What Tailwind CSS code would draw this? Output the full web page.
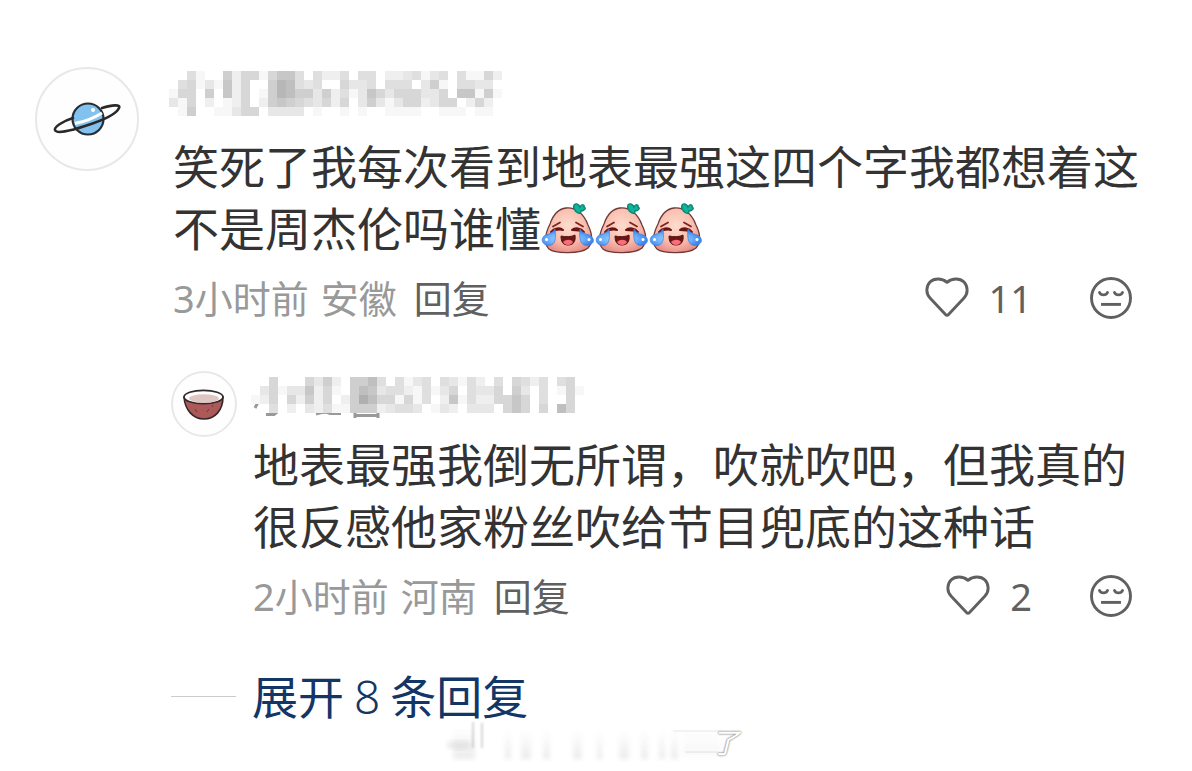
<!DOCTYPE html>
<html lang="zh-CN">
<head>
<meta charset="utf-8">
<meta name="viewport" content="width=device-width, initial-scale=1">
<title>评论</title>
<script src="https://cdn.jsdelivr.net/npm/@tailwindcss/browser@4"></script>
</head>
<body class="bg-white font-['Noto_Sans','Noto_Sans_CJK_SC',sans-serif] text-[#333]">
<!-- Shared symbols -->
<svg class="absolute size-0" aria-hidden="true">
  <defs>
    <radialGradient id="skin" cx=".48" cy=".4" r=".62"><stop offset="0" stop-color="#fddccd"/><stop offset=".6" stop-color="#f9bfb0"/><stop offset="1" stop-color="#e98d86"/></radialGradient>
    <radialGradient id="tear" cx=".45" cy=".6" r=".6"><stop offset="0" stop-color="#b4dcff"/><stop offset=".6" stop-color="#6bb0fb"/><stop offset="1" stop-color="#2f78ea"/></radialGradient>
    <symbol id="laugh" viewBox="0 0 54 54">
      <path d="M25 6C35 5 43 12 47 23C51 31 53 39 47 46C40 52 14 52 8 47C2 41 5 30 9 22C12 13 17 7 25 6Z" fill="url(#skin)" stroke="#6d3a38" stroke-width="1.3"/>
      <path d="M37 11C33 9 32 5 33 3C35 1 38 2 39 5C41 1 44 3 43 5C46 6 43 9 40 9C40 11 39 12 37 11Z" fill="#12b39a" stroke="#08806f" stroke-width="1.3"/>
      <path d="M12 24.500L19 20.500M35 20.500L42 24.500" stroke="#7c2620" stroke-width="1.8" stroke-linecap="round"/>
      <path d="M10 30C13 26 19 25 22 28C18 27 14 28 10 30ZM31 28C34 25 40 26 43 30C39 28 35 28 31 28Z" fill="#6b1414" stroke="#6b1414" stroke-width="2" stroke-linejoin="round"/>
      <path d="M20 34C24 35 31 35 34 33C35 40 32 43 27 43C22 43 20 40 20 34Z" fill="#6a1714" stroke="#5a1512"/>
      <path d="M22 40C25 37 30 37 32 40C30 44 24 44 22 40Z" fill="#fb6d78"/>
      <path d="M14 27C15 35 15 43 8 43.500C2 43.500 -1 38 3 34C6 32 11 32 14 27ZM39 27C38 35 39 43 45 43.500C52 43.500 55 38 50 34C47 32 42 32 39 27Z" fill="url(#tear)" stroke="#3b80e5" stroke-width=".7"/>
      <circle cx="5.500" cy="37.500" r="1.500" fill="#fff"/><circle cx="48" cy="37.500" r="1.500" fill="#fff"/>
    </symbol>
    <symbol id="heart" viewBox="0 0 44 42">
      <path d="M22 5.300C17 .8 9 1 5 5C.8 9.500 .8 16.500 5 21L20.500 37.500Q22 39.200 23.500 37.500L39 21C43.200 16.500 43.200 9.500 39 5C35 1 27 .8 22 5.300Z" fill="none" stroke="#606060" stroke-width="2.900" stroke-linejoin="round"/>
    </symbol>
    <symbol id="face" viewBox="0 0 44 44">
      <g fill="none" stroke="#606060" stroke-width="2.900" stroke-linecap="round">
        <circle cx="22" cy="22" r="19.500"/>
        <path d="M10.500 16.500C12 19.700 17 19.700 18.500 16.500M25.500 16.500C27 19.700 32 19.700 33.500 16.500"/>
        <path d="M13.500 28.400H30.500" stroke-linecap="square"/>
      </g>
    </symbol>
  </defs>
</svg>

<main class="pl-[35px] pr-[44px] pt-[67px]">
  <article class="flex items-start gap-[30px]">
    <svg class="size-[104px] shrink-0" viewBox="0 0 104 104" role="img" aria-label="头像">
      <circle cx="52" cy="52" r="51" fill="#fefefe" stroke="#e8e8e8" stroke-width="2"/>
      <circle cx="53" cy="52" r="15.500" fill="#83c1ee" stroke="#272d32" stroke-width="2.200"/>
      <path d="M40 56.500Q54 54 67 46" fill="none" stroke="#fff" stroke-width="3"/>
      <path d="M67 41C77 38 86 37 84 41C81 48 66 54 50 59C35 64 21 67 20 63C19 60 28 54 38 51" fill="none" stroke="#292929" stroke-width="2.600" stroke-linecap="round"/>
      <circle cx="58" cy="43" r="2" fill="#fff"/>
    </svg>

    <div class="min-w-0 flex-1">
      <svg data-rows="0041006255157740422404402234134041152/0451317250069843400533404440361044330/1550607250169866362413753555335077161/3150201250267654352503631355235502520/0160011355033330100101001111001110110" class="mosaic mt-1 h-[45px] w-[333px]" viewBox="0 0 333 45" role="img" aria-label="用户昵称"></svg>

      <div class="pl-1">
        <p class="mt-[19px] text-[46px] leading-[62px]">笑死了我每次看到地表最强这四个字我都想着这不是周杰伦吗谁懂<span class="inline-flex h-[54px] align-[-10px]"><svg class="size-[54px]" role="img" aria-label="笑哭"><use href="#laugh"/></svg><svg class="size-[54px]" role="img" aria-label="笑哭"><use href="#laugh"/></svg><svg class="size-[54px]" role="img" aria-label="笑哭"><use href="#laugh"/></svg></span></p>
        <div class="mt-[14px] flex items-center pr-[15px] text-[38px] leading-[50px] text-[#999]">
          <span>3小时前</span><span class="ml-3">安徽</span>
          <button type="button" class="ml-[17px] text-[#606060]">回复</button>
          <button type="button" class="ml-auto flex items-center gap-5 text-[#606060]" aria-label="赞 11"><svg class="h-[42px] w-[44px]"><use href="#heart"/></svg><span>11</span></button>
          <button type="button" class="ml-[57px]" aria-label="不喜欢"><svg class="size-[44px]"><use href="#face"/></svg></button>
        </div>
      </div>
    </div>
  </article>

  <section class="pl-[136px] pt-12">
    <article class="flex items-start gap-[14px]">
      <svg class="size-[66px] shrink-0" viewBox="0 0 66 66" role="img" aria-label="头像">
        <circle cx="33" cy="33" r="32" fill="#fefefe" stroke="#e8e8e8" stroke-width="2"/>
        <path d="M13 26C14 39 22 48 33 48C44 48 52 39 52 26Z" fill="#ad595a" stroke="#33282a" stroke-width="1.600"/>
        <ellipse cx="32.500" cy="26" rx="19.500" ry="6.700" fill="#fff" stroke="#33282a" stroke-width="1.700"/>
        <ellipse cx="33" cy="27.500" rx="15" ry="4.200" fill="#e0c6c3"/>
        <path d="M24 38l2 3M36 41l2-3M41 36l1-2" stroke="#74383a" stroke-width="1"/>
      </svg>
      <div class="min-w-0 flex-1">
        <svg data-rows="0050005362066840413404314204054240450/0351337251068734421413504335063040151/125052625026a855151402714225575040050/0040203241166623443013203330575050850" class="mosaic mt-[6px] h-[42px] w-[333px]" viewBox="0 0 333 42" role="img" aria-label="用户昵称"><g fill="none" stroke="#999" stroke-width="3"><path d="M8 23L4 31M15 37.500H23L26 35M65 37Q74 34 79 36.500H90M104 34V41M127 36V41M104 38.500H127"/></g></svg>
        <div class="pl-[2px]">
          <p class="mt-[14px] text-[46px] leading-[62px]">地表最强我倒无所谓，吹就吹吧，但我真的很反感他家粉丝吹给节目兜底的这种话</p>
          <div class="mt-[14px] flex items-center pr-[15px] text-[38px] leading-[50px] text-[#999]">
            <span>2小时前</span><span class="ml-3">河南</span>
            <button type="button" class="ml-[17px] text-[#606060]">回复</button>
            <button type="button" class="ml-auto flex items-center gap-5 text-[#606060]" aria-label="赞 2"><svg class="h-[42px] w-[44px]"><use href="#heart"/></svg><span>2</span></button>
            <button type="button" class="ml-[57px]" aria-label="不喜欢"><svg class="size-[44px]"><use href="#face"/></svg></button>
          </div>
        </div>
      </div>
    </article>

    <button type="button" class="mt-[44px] flex items-center gap-4 text-[46px] leading-[62px] text-[#133667]"><span class="h-px w-[65px] bg-[#ccc]"></span><span class="flex gap-[10px]"><span>展开</span> <span class="font-light">8</span> <span>条回复</span></span></button>
  </section>
</main>

<!-- Smeared watermark -->
<footer class="flex h-10 items-center justify-center">
  <div class="relative h-10 w-[302px]">
    <svg class="absolute inset-0 -top-2 h-12 w-[302px]" viewBox="0 0 302 48" aria-hidden="true">
      <defs>
        <linearGradient id="fade" x2="0" y2="1"><stop stop-color="#777" stop-opacity="0"/><stop offset="1" stop-color="#777" stop-opacity=".14"/></linearGradient>
        <filter id="soft"><feGaussianBlur stdDeviation="2"/></filter>
        <filter id="line-soft" x="-50%" width="200%"><feGaussianBlur stdDeviation="1"/></filter>
      </defs>
      <g filter="url(#soft)" fill="url(#fade)">
        <rect x="8" y="10" width="22" height="30"/><rect x="60" y="12" width="6" height="28"/><rect x="76" y="12" width="10" height="28"/><rect x="98" y="12" width="7" height="28"/><rect x="128" y="12" width="9" height="28"/><rect x="152" y="12" width="5" height="28"/><rect x="174" y="12" width="10" height="28"/><rect x="196" y="12" width="7" height="28"/><rect x="214" y="12" width="6" height="28"/><rect x="226" y="12" width="7" height="28"/><rect x="238" y="12" width="38" height="24" opacity=".4"/>
      </g>
      <ellipse cx="14" cy="26" rx="13" ry="5" fill="#888" opacity=".14" filter="url(#soft)"/>
      <path d="M28 3V29M37 4V29" stroke="#777" stroke-width="2" opacity=".3" filter="url(#line-soft)"/>
      <path d="M228 12H276M240 33H272" stroke="#888" opacity=".2"/>
    </svg>
    <span class="absolute right-2 -top-1 text-[28px] leading-[38px] text-white italic [text-shadow:0_0_2px_#777,0_0_2px_#999]">了</span>
  </div>
</footer>

<script>
  // Each digit is one 9px cell of a masked name: 0 is clear, higher is darker.
  document.querySelectorAll('.mosaic').forEach(function (svg) {
    svg.dataset.rows.split('/').forEach(function (row, y) {
      Array.from(row).forEach(function (digit, x) {
        var depth = parseInt(digit, 16);
        if (!depth) return;
        var cell = document.createElementNS('http://www.w3.org/2000/svg', 'rect');
        var tone = 255 - depth * 8;
        cell.setAttribute('x', x * 9);
        cell.setAttribute('y', y * 9);
        cell.setAttribute('width', 9);
        cell.setAttribute('height', 9);
        cell.setAttribute('fill', 'rgb(' + tone + ',' + tone + ',' + tone + ')');
        svg.appendChild(cell);
      });
    });
  });
</script>
</body>
</html>
